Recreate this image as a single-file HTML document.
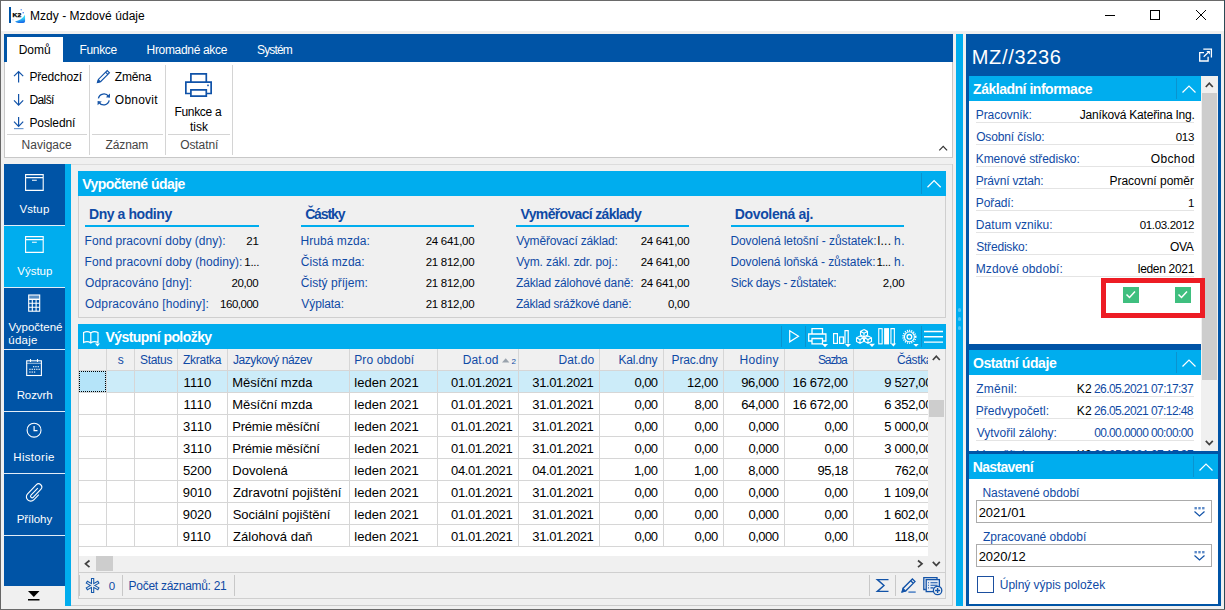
<!DOCTYPE html>
<html lang="cs">
<head>
<meta charset="utf-8">
<title>Mzdy - Mzdové údaje</title>
<style>
*{box-sizing:border-box;margin:0;padding:0}
html,body{width:1225px;height:610px;overflow:hidden;background:#f0f0f0}
body{position:relative;font-family:"Liberation Sans","DejaVu Sans",sans-serif;font-size:12px;color:#000}
.a{position:absolute}
.t{position:absolute;white-space:nowrap;line-height:16px;font-size:12px}
.bl{color:#0f4aa5}
.w{color:#fff}
.b{font-weight:bold}
svg{position:absolute;overflow:visible}
.ic{fill:none;stroke:#1253a8;stroke-width:1.2}
.iw{fill:none;stroke:#fff;stroke-width:1.2}
</style>
</head>
<body>
<div class="a" style="left:0px;top:0px;width:1225px;height:1px;background:#6a6a6a"></div>
<div class="a" style="left:0px;top:0px;width:1px;height:610px;background:#666"></div>
<div class="a" style="left:1224px;top:0px;width:1px;height:610px;background:#2b4a55"></div>
<div class="a" style="left:0px;top:609px;width:1225px;height:1px;background:#6a6a6a"></div>
<div class="a" style="left:1px;top:1px;width:1223px;height:30px;background:#fff"></div>
<div class="a" style="left:9px;top:7px;width:2px;height:16px;background:#0054a6"></div>
<svg style="left:9px;top:7px" width="17" height="17" viewBox="9 7 17 17"><defs><linearGradient id="k2g" x1="0" y1="0" x2="0.200" y2="1"><stop offset="0" stop-color="#3ff0ff"/><stop offset="0.550" stop-color="#2fd0f8"/><stop offset="1" stop-color="#1a6fe8"/></linearGradient></defs><path d="M25 14.800L25.100 21.300Q25 23 23.400 23L18.500 23Q16.500 22.600 15 21.400Q21.500 20.500 25 14.800Z" fill="url(#k2g)"/><circle cx="21.200" cy="9.800" r="0.700" fill="#4b8df0"/><circle cx="23.200" cy="12.800" r="0.800" fill="#3f7ff0"/><circle cx="13" cy="19.800" r="0.600" fill="#9cc4f5"/><text x="12.600" y="16.800" font-family="Liberation Sans,sans-serif" font-weight="bold" font-size="5.600" textLength="8.700" lengthAdjust="spacingAndGlyphs" fill="#000" stroke="#000" stroke-width="0.250">K2</text></svg>
<div class="t" style="left:29.92px;top:8px;letter-spacing:0.043px">Mzdy - Mzdové údaje</div>
<svg style="left:1100px;top:5px" width="115" height="20" viewBox="0 0 115 20"><g fill="none" stroke="#000" stroke-width="1"><path d="M5 10.500h10"/><rect x="50.500" y="5.500" width="9" height="9"/><path d="M96 5l10 10M106 5l-10 10"/></g></svg>
<div class="a" style="left:4px;top:34px;width:949px;height:28px;background:#0054a6"></div>
<div class="a" style="left:7px;top:37px;width:56px;height:25px;background:#fff"></div>
<div class="a" style="left:4px;top:62px;width:949px;height:96px;background:#fff;border:1px solid #c8c8c8;border-top:0"></div>
<div class="t" style="left:18.72px;top:42px;letter-spacing:-0.043px">Domů</div>
<div class="t w" style="left:79.42px;top:42px;letter-spacing:-0.307px">Funkce</div>
<div class="t w" style="left:146.62px;top:42px;letter-spacing:-0.333px">Hromadné akce</div>
<div class="t w" style="left:257.06px;top:42px;letter-spacing:-0.874px">Systém</div>
<div class="a" style="left:89px;top:65px;width:1px;height:90px;background:#d4d4d4"></div>
<div class="a" style="left:165px;top:65px;width:1px;height:90px;background:#d4d4d4"></div>
<div class="a" style="left:232px;top:65px;width:1px;height:90px;background:#d4d4d4"></div>
<div class="a" style="left:7px;top:134px;width:80px;height:1px;background:#d4d4d4"></div>
<div class="a" style="left:92px;top:134px;width:71px;height:1px;background:#d4d4d4"></div>
<div class="a" style="left:168px;top:134px;width:62px;height:1px;background:#d4d4d4"></div>
<div class="t" style="left:29.42px;top:69px;letter-spacing:-0.173px">Předchozí</div>
<div class="t" style="left:29.42px;top:92px;letter-spacing:-0.574px">Další</div>
<div class="t" style="left:29.42px;top:115px;letter-spacing:-0.094px">Poslední</div>
<div class="t" style="left:114.72px;top:69px;letter-spacing:-0.142px">Změna</div>
<div class="t" style="left:114.83px;top:92px;letter-spacing:0.217px">Obnovit</div>
<div class="t" style="left:174.42px;top:104px;letter-spacing:-0.311px">Funkce a</div>
<div class="t" style="left:190.02px;top:119px;letter-spacing:-0.012px">tisk</div>
<div class="t" style="left:21.62px;top:137px;letter-spacing:0.013px;color:#444">Navigace</div>
<div class="t" style="left:105.62px;top:137px;letter-spacing:-0.135px;color:#444">Záznam</div>
<div class="t" style="left:180.13px;top:137px;letter-spacing:-0.059px;color:#444">Ostatní</div>
<svg style="left:12px;top:70px" width="14" height="60" viewBox="0 0 14 60"><g class="ic"><path d="M6.600 12.600V1.500M2 6.200l4.600-4.700L11.200 6.200"/><path d="M6.600 24v11M2 30.400l4.600 4.700L11.200 30.400"/><path d="M6.600 47v9.300M2 51.700l4.600 4.700l4.600-4.700"/><path d="M2 58.600h9.500" stroke="#6f9bd0"/></g></svg>
<svg style="left:96px;top:69px" width="16" height="40" viewBox="0 0 16 40"><g class="ic"><path d="M1.600 13.400L2.600 10.200L11.200 1.600L13.400 3.800L4.800 12.400ZM9.600 3.200l2.200 2.200"/><path d="M1.600 13.400l0.800-2.600l1.800 1.800z" fill="#1b57a8"/><path d="M2.400 29.400A5.600 5.600 0 0 1 12.650 27.600" style="stroke-width:1.300"/><path d="M13.200 31.400A5.600 5.600 0 0 1 3 33.300" style="stroke-width:1.300"/></g><path d="M14 24.500V28.800L9.800 28.300Z M1.600 36.300V32L5.800 32.500Z" fill="#1b57a8"/></svg>
<svg style="left:185px;top:73px" width="27" height="24" viewBox="0 0 27 24"><g class="ic" style="stroke-width:1.700;stroke:#0f52a8"><path d="M5.900 8.600V0.850h15.400V8.600M5.900 20.500H0.850V9.100h25.300v11.400H21.300M5.900 16.800h15.400v6.300H5.900z"/></g><rect x="22.200" y="11.600" width="1.600" height="1.600" fill="#0f52a8"/></svg>
<svg style="left:939px;top:146px" width="9" height="5" viewBox="0 0 9 5"><path d="M0.300 4.300l3.900-3.900l3.900 3.900" fill="none" stroke="#333" stroke-width="1.200"/></svg>
<div class="a" style="left:4px;top:164px;width:949px;height:1px;background:#dcdcdc"></div>
<div class="a" style="left:952px;top:164px;width:1px;height:442px;background:#cccccc"></div>
<div class="a" style="left:71px;top:605px;width:882px;height:1px;background:#cccccc"></div>
<div class="a" style="left:4px;top:164px;width:61px;height:422px;background:#0054a6"></div>
<div class="a" style="left:65px;top:164px;width:6px;height:442px;background:#00adee"></div>
<div class="a" style="left:4px;top:226px;width:61px;height:61px;background:#00adee"></div>
<div class="a" style="left:4px;top:225px;width:61px;height:1px;background:#e3edf7"></div>
<div class="a" style="left:4px;top:287px;width:61px;height:1px;background:#e3edf7"></div>
<div class="a" style="left:4px;top:349px;width:61px;height:1px;background:#e3edf7"></div>
<div class="a" style="left:4px;top:411px;width:61px;height:1px;background:#e3edf7"></div>
<div class="a" style="left:4px;top:473px;width:61px;height:1px;background:#e3edf7"></div>
<div class="a" style="left:4px;top:535px;width:61px;height:1px;background:#e3edf7"></div>
<div class="t w" style="left:19.45px;top:201px;font-size:11.5px;letter-spacing:0.107px">Vstup</div>
<div class="t w" style="left:17.35px;top:263px;font-size:11.5px;letter-spacing:-0.025px">Výstup</div>
<div class="t w" style="left:8.55px;top:319px;font-size:11.5px;letter-spacing:0.005px">Vypočtené</div>
<div class="t w" style="left:8.22px;top:332px;font-size:11.5px;letter-spacing:0.288px">údaje</div>
<div class="t w" style="left:16.66px;top:387px;font-size:11.5px;letter-spacing:-0.087px">Rozvrh</div>
<div class="t w" style="left:13.36px;top:449px;font-size:11.5px;letter-spacing:0.296px">Historie</div>
<div class="t w" style="left:16.66px;top:511px;font-size:11.5px;letter-spacing:-0.038px">Přílohy</div>
<svg style="left:24.500px;top:174px" width="19" height="17" viewBox="0 0 19 17"><g class="iw" style="stroke-width:1.100"><path d="M0.600 0.600h17.600v15.800h-17.600zM0.600 3.600h17.600M7 6.300h4.800"/></g></svg>
<svg style="left:24.500px;top:236px" width="19" height="17" viewBox="0 0 19 17"><g class="iw" style="stroke-width:1.100"><path d="M0.600 0.600h17.600v15.800h-17.600zM0.600 3.600h17.600M7 6.300h4.800"/></g></svg>
<svg style="left:28px;top:294px" width="13" height="18" viewBox="0 0 13 18"><rect x="0.700" y="1" width="11" height="4" fill="#fff" fill-opacity="0.350"/><g class="iw" style="stroke-width:1.100"><rect x="0.700" y="1" width="11" height="16.200"/><path d="M0.700 5.300h11" stroke-width="1.400"/><path d="M0.700 9.300h11M0.700 13.200h11M4.300 5.300v12M8.100 5.300v12"/></g></svg>
<svg style="left:26px;top:359px" width="16" height="17" viewBox="0 0 16 17"><g class="iw" style="stroke-width:1.100"><rect x="0.700" y="1.800" width="14.700" height="14.700"/><path d="M4.500 0v3M11.500 0v3"/><path d="M0.700 4.300h14.700" stroke-opacity="0.600"/></g><g fill="#fff" fill-opacity="0.850"><rect x="7" y="7" width="1.300" height="1.300"/><rect x="9.300" y="7" width="1.300" height="1.300"/><rect x="11.600" y="7" width="1.300" height="1.300"/><rect x="3.300" y="9.700" width="1.300" height="1.300"/><rect x="5.600" y="9.700" width="1.300" height="1.300"/><rect x="7.900" y="9.700" width="1.300" height="1.300"/><rect x="10.200" y="9.700" width="1.300" height="1.300"/><rect x="12.500" y="9.700" width="1.300" height="1.300"/><rect x="3.300" y="12.400" width="1.300" height="1.300"/><rect x="5.600" y="12.400" width="1.300" height="1.300"/><rect x="7.900" y="12.400" width="1.300" height="1.300"/></g></svg>
<svg style="left:26px;top:422px" width="16" height="16" viewBox="0 0 16 16"><g class="iw" style="stroke-width:1.100"><circle cx="8.050" cy="8.150" r="6.950"/><path d="M8.100 4v4.600h3.400" stroke-width="1.200"/></g></svg>
<svg style="left:25px;top:482px" width="18" height="20" viewBox="0 0 18 20"><g class="iw" style="stroke-width:1.100"><path d="M12.800 6.200l-6.800 7a1.500 1.500 0 0 0 2.200 2.100l7.600-8a3.200 3.200 0 0 0-4.600-4.500l-8.600 9a4.300 4.300 0 0 0 6.200 6l5-5.200"/></g></svg>
<svg style="left:28px;top:591px" width="12" height="11" viewBox="0 0 12 11"><path d="M0 0h11.500l-5.700 6z" fill="#000"/><rect x="0" y="8" width="11.500" height="1.500" fill="#000"/></svg>
<div class="a" style="left:78px;top:196px;width:868px;height:122px;background:transparent;border:1px solid #cfcfcf;border-top:0"></div>
<div class="a" style="left:78px;top:171px;width:868px;height:25px;background:#00adee"></div>
<div class="t b w" style="left:82.20px;top:176px;font-size:14px;letter-spacing:-0.540px">Vypočtené údaje</div>
<div class="a" style="left:921px;top:173px;width:1px;height:21px;background:#0a93cf"></div>
<svg style="left:926.500px;top:180px" width="15" height="8" viewBox="0 0 15 8"><path d="M0.500 7.200l6.600-6.600l6.600 6.600" class="iw" style="stroke-width:1.300"/></svg>
<div class="t b bl" style="left:88.96px;top:206px;font-size:14px;letter-spacing:-0.417px">Dny a hodiny</div>
<div class="a" style="left:85px;top:225px;width:174px;height:2px;background:#00adee"></div>
<div class="t bl" style="left:84.62px;top:233px;letter-spacing:0.042px">Fond pracovní doby (dny):</div>
<div class="t" style="left:246.32px;top:233px;font-size:11.5px;letter-spacing:-0.252px">21</div>
<div class="t bl" style="left:84.62px;top:254px;letter-spacing:0.063px">Fond pracovní doby (hodiny):</div>
<div class="t" style="left:244.32px;top:254px;font-size:11.5px;letter-spacing:-0.318px">1...</div>
<div class="t bl" style="left:85.03px;top:275px;letter-spacing:0.137px">Odpracováno [dny]:</div>
<div class="t" style="left:231.52px;top:275px;font-size:11.5px;letter-spacing:-0.388px">20,00</div>
<div class="t bl" style="left:85.03px;top:296px;letter-spacing:0.151px">Odpracováno [hodiny]:</div>
<div class="t" style="left:220.12px;top:296px;font-size:11.5px;letter-spacing:-0.491px">160,000</div>
<div class="t b bl" style="left:305.13px;top:206px;font-size:14px;letter-spacing:-1.114px">Částky</div>
<div class="a" style="left:301px;top:225px;width:173px;height:2px;background:#00adee"></div>
<div class="t bl" style="left:300.42px;top:233px;letter-spacing:0.068px">Hrubá mzda:</div>
<div class="t" style="left:425.72px;top:233px;font-size:11.5px;letter-spacing:-0.292px">24 641,00</div>
<div class="t bl" style="left:300.79px;top:254px;letter-spacing:0.055px">Čistá mzda:</div>
<div class="t" style="left:425.72px;top:254px;font-size:11.5px;letter-spacing:-0.292px">21 812,00</div>
<div class="t bl" style="left:300.79px;top:275px;letter-spacing:0.028px">Čistý příjem:</div>
<div class="t" style="left:425.72px;top:275px;font-size:11.5px;letter-spacing:-0.292px">21 812,00</div>
<div class="t bl" style="left:301.35px;top:296px;letter-spacing:-0.102px">Výplata:</div>
<div class="t" style="left:425.72px;top:296px;font-size:11.5px;letter-spacing:-0.292px">21 812,00</div>
<div class="t b bl" style="left:520.60px;top:206px;font-size:14px;letter-spacing:-0.670px">Vyměřovací základy</div>
<div class="a" style="left:516px;top:225px;width:173px;height:2px;background:#00adee"></div>
<div class="t bl" style="left:516.35px;top:233px;letter-spacing:-0.166px">Vyměřovací základ:</div>
<div class="t" style="left:640.72px;top:233px;font-size:11.5px;letter-spacing:-0.292px">24 641,00</div>
<div class="t bl" style="left:516.35px;top:254px;letter-spacing:-0.107px">Vym. zákl. zdr. poj.:</div>
<div class="t" style="left:640.72px;top:254px;font-size:11.5px;letter-spacing:-0.292px">24 641,00</div>
<div class="t bl" style="left:516.02px;top:275px;letter-spacing:-0.164px">Základ zálohové daně:</div>
<div class="t" style="left:640.72px;top:275px;font-size:11.5px;letter-spacing:-0.292px">24 641,00</div>
<div class="t bl" style="left:516.02px;top:296px;letter-spacing:-0.263px">Základ srážkové daně:</div>
<div class="t" style="left:667.95px;top:296px;font-size:11.5px;letter-spacing:-0.261px">0,00</div>
<div class="t b bl" style="left:734.76px;top:206px;font-size:14px;letter-spacing:-0.352px">Dovolená aj.</div>
<div class="a" style="left:731px;top:225px;width:173px;height:2px;background:#00adee"></div>
<div class="t bl" style="left:730.42px;top:233px;letter-spacing:-0.074px">Dovolená letošní - zůstatek:</div>
<div class="t bl" style="left:730.42px;top:254px;letter-spacing:-0.090px">Dovolená loňská - zůstatek:</div>
<div class="t bl" style="left:730.86px;top:275px;letter-spacing:-0.210px">Sick days - zůstatek:</div>
<div class="t" style="left:882.82px;top:275px;font-size:11.5px;letter-spacing:-0.218px">2,00</div>
<div class="t" style="left:877.49px;top:233px;letter-spacing:0.312px">l...</div>
<div class="t bl" style="left:893.97px;top:233px;letter-spacing:0.620px">h.</div>
<div class="t" style="left:876.42px;top:254px;font-size:11.5px;letter-spacing:-0.452px">1...</div>
<div class="t bl" style="left:893.97px;top:254px;letter-spacing:0.620px">h.</div>
<div class="a" style="left:78px;top:324px;width:868px;height:25px;background:#00adee"></div>
<div class="a" style="left:78px;top:349px;width:868px;height:250px;background:transparent;border:1px solid #cfcfcf;border-top:0"></div>
<div class="t b w" style="left:105.40px;top:329px;font-size:14px;letter-spacing:-0.557px">Výstupní položky</div>
<svg style="left:83px;top:331px" width="18" height="16" viewBox="0 0 18 16"><g class="iw"><path d="M7.800 2v9.500M7.800 2c-2-1.500-5-1.500-7.200-0.500v10c2.200-1 5.200-1 7.200 0.500c2-1.500 5-1.500 7.200-0.500v-10c-2.200-1-5.200-1-7.200 0.500"/></g><path d="M12 12.500h5l-2.500 3z" fill="#fff"/></svg>
<div class="a" style="left:79px;top:349px;width:849px;height:22px;background:#f0f0f0"></div>
<div class="a" style="left:79px;top:371px;width:849px;height:176px;background:#fff"></div>
<div class="a" style="left:79px;top:547px;width:849px;height:9px;background:#fff"></div>
<div class="a" style="left:107px;top:371px;width:821px;height:22px;background:#ccecf9"></div>
<div class="a" style="left:79px;top:370px;width:849px;height:1px;background:#d6d6d6"></div>
<div class="a" style="left:79px;top:392px;width:849px;height:1px;background:#d6d6d6"></div>
<div class="a" style="left:79px;top:414px;width:849px;height:1px;background:#d6d6d6"></div>
<div class="a" style="left:79px;top:436px;width:849px;height:1px;background:#d6d6d6"></div>
<div class="a" style="left:79px;top:458px;width:849px;height:1px;background:#d6d6d6"></div>
<div class="a" style="left:79px;top:480px;width:849px;height:1px;background:#d6d6d6"></div>
<div class="a" style="left:79px;top:502px;width:849px;height:1px;background:#d6d6d6"></div>
<div class="a" style="left:79px;top:524px;width:849px;height:1px;background:#d6d6d6"></div>
<div class="a" style="left:79px;top:546px;width:849px;height:1px;background:#d6d6d6"></div>
<div class="a" style="left:106px;top:349px;width:1px;height:198px;background:#d6d6d6"></div>
<div class="a" style="left:134px;top:349px;width:1px;height:198px;background:#d6d6d6"></div>
<div class="a" style="left:177px;top:349px;width:1px;height:198px;background:#d6d6d6"></div>
<div class="a" style="left:227px;top:349px;width:1px;height:198px;background:#d6d6d6"></div>
<div class="a" style="left:349px;top:349px;width:1px;height:198px;background:#d6d6d6"></div>
<div class="a" style="left:437px;top:349px;width:1px;height:198px;background:#d6d6d6"></div>
<div class="a" style="left:518px;top:349px;width:1px;height:198px;background:#d6d6d6"></div>
<div class="a" style="left:599px;top:349px;width:1px;height:198px;background:#d6d6d6"></div>
<div class="a" style="left:663px;top:349px;width:1px;height:198px;background:#d6d6d6"></div>
<div class="a" style="left:723px;top:349px;width:1px;height:198px;background:#d6d6d6"></div>
<div class="a" style="left:784px;top:349px;width:1px;height:198px;background:#d6d6d6"></div>
<div class="a" style="left:853px;top:349px;width:1px;height:198px;background:#d6d6d6"></div>
<div class="a" style="left:79px;top:371px;width:27px;height:21px;background:#b5e4f9;border:1px dotted #000"></div>
<div class="a" style="left:79px;top:349px;width:849px;height:200px;overflow:hidden">
<div class="t bl" style="left:38.75px;top:3px">s</div>
<div class="t bl" style="left:61.06px;top:3px;letter-spacing:-0.328px">Status</div>
<div class="t bl" style="left:104.02px;top:3px;letter-spacing:-0.271px">Zkratka</div>
<div class="t bl" style="left:153.91px;top:3px;letter-spacing:-0.421px">Jazykový název</div>
<div class="t bl" style="left:275.22px;top:3px;letter-spacing:0.126px">Pro období</div>
<div class="t bl" style="left:383.72px;top:3px;letter-spacing:0.060px">Dat.od</div>
<div class="t bl" style="left:432.60px;top:8px;font-size:8px;line-height:10px">2</div>
<svg style="left:423px;top:9px" width="8" height="5" viewBox="0 0 8 5"><path d="M0 4.500l3.700-4.200l3.700 4.200z" fill="#9aa3ad"/></svg>
<div class="t bl" style="left:479.52px;top:3px;letter-spacing:0.047px">Dat.do</div>
<div class="t bl" style="left:539.42px;top:3px;letter-spacing:-0.136px">Kal.dny</div>
<div class="t bl" style="left:592.62px;top:3px;letter-spacing:-0.178px">Prac.dny</div>
<div class="t bl" style="left:660.62px;top:3px;letter-spacing:0.311px">Hodiny</div>
<div class="t bl" style="left:738.96px;top:3px;letter-spacing:-1.095px">Sazba</div>
<div class="t bl" style="left:817.89px;top:3px;letter-spacing:-0.348px">Částka</div>
<div class="t" style="left:104.51px;top:26px;font-size:13px;letter-spacing:0.269px">1110</div>
<div class="t" style="left:153.23px;top:26px;font-size:13px;letter-spacing:-0.059px">Měsíční mzda</div>
<div class="t" style="left:275.32px;top:26px;font-size:13px">leden 2021</div>
<div class="t" style="left:372.09px;top:26px;font-size:13px;letter-spacing:-0.391px">01.01.2021</div>
<div class="t" style="left:453.30px;top:26px;font-size:13px;letter-spacing:-0.393px">31.01.2021</div>
<div class="t" style="left:555.49px;top:26px;font-size:13px;letter-spacing:-0.562px">0,00</div>
<div class="t" style="left:608.11px;top:26px;font-size:13px;letter-spacing:-0.358px">12,00</div>
<div class="t" style="left:662.29px;top:26px;font-size:13px;letter-spacing:-0.409px">96,000</div>
<div class="t" style="left:713.45px;top:26px;font-size:13px;letter-spacing:-0.272px">16 672,00</div>
<div class="t" style="left:805.23px;top:26px;font-size:13px;letter-spacing:-0.332px">9 527,00</div>
<div class="t" style="left:104.51px;top:48px;font-size:13px;letter-spacing:0.269px">1110</div>
<div class="t" style="left:153.23px;top:48px;font-size:13px;letter-spacing:-0.059px">Měsíční mzda</div>
<div class="t" style="left:275.32px;top:48px;font-size:13px">leden 2021</div>
<div class="t" style="left:372.09px;top:48px;font-size:13px;letter-spacing:-0.391px">01.01.2021</div>
<div class="t" style="left:453.30px;top:48px;font-size:13px;letter-spacing:-0.393px">31.01.2021</div>
<div class="t" style="left:555.49px;top:48px;font-size:13px;letter-spacing:-0.562px">0,00</div>
<div class="t" style="left:615.54px;top:48px;font-size:13px;letter-spacing:-0.543px">8,00</div>
<div class="t" style="left:662.24px;top:48px;font-size:13px;letter-spacing:-0.399px">64,000</div>
<div class="t" style="left:713.45px;top:48px;font-size:13px;letter-spacing:-0.272px">16 672,00</div>
<div class="t" style="left:805.18px;top:48px;font-size:13px;letter-spacing:-0.325px">6 352,00</div>
<div class="t" style="left:103.90px;top:70px;font-size:13px;letter-spacing:0.216px">3110</div>
<div class="t" style="left:153.23px;top:70px;font-size:13px;letter-spacing:-0.206px">Prémie měsíční</div>
<div class="t" style="left:275.32px;top:70px;font-size:13px">leden 2021</div>
<div class="t" style="left:372.09px;top:70px;font-size:13px;letter-spacing:-0.391px">01.01.2021</div>
<div class="t" style="left:453.30px;top:70px;font-size:13px;letter-spacing:-0.393px">31.01.2021</div>
<div class="t" style="left:555.49px;top:70px;font-size:13px;letter-spacing:-0.562px">0,00</div>
<div class="t" style="left:615.59px;top:70px;font-size:13px;letter-spacing:-0.562px">0,00</div>
<div class="t" style="left:669.39px;top:70px;font-size:13px;letter-spacing:-0.479px">0,000</div>
<div class="t" style="left:745.49px;top:70px;font-size:13px;letter-spacing:-0.562px">0,00</div>
<div class="t" style="left:805.32px;top:70px;font-size:13px;letter-spacing:-0.345px">5 000,00</div>
<div class="t" style="left:103.90px;top:92px;font-size:13px;letter-spacing:0.216px">3110</div>
<div class="t" style="left:153.23px;top:92px;font-size:13px;letter-spacing:-0.206px">Prémie měsíční</div>
<div class="t" style="left:275.32px;top:92px;font-size:13px">leden 2021</div>
<div class="t" style="left:372.09px;top:92px;font-size:13px;letter-spacing:-0.391px">01.01.2021</div>
<div class="t" style="left:453.30px;top:92px;font-size:13px;letter-spacing:-0.393px">31.01.2021</div>
<div class="t" style="left:555.49px;top:92px;font-size:13px;letter-spacing:-0.562px">0,00</div>
<div class="t" style="left:615.59px;top:92px;font-size:13px;letter-spacing:-0.562px">0,00</div>
<div class="t" style="left:669.39px;top:92px;font-size:13px;letter-spacing:-0.479px">0,000</div>
<div class="t" style="left:745.49px;top:92px;font-size:13px;letter-spacing:-0.562px">0,00</div>
<div class="t" style="left:805.34px;top:92px;font-size:13px;letter-spacing:-0.349px">3 000,00</div>
<div class="t" style="left:103.88px;top:114px;font-size:13px;letter-spacing:-0.097px">5200</div>
<div class="t" style="left:153.23px;top:114px;font-size:13px;letter-spacing:0.077px">Dovolená</div>
<div class="t" style="left:275.32px;top:114px;font-size:13px">leden 2021</div>
<div class="t" style="left:372.09px;top:114px;font-size:13px;letter-spacing:-0.391px">04.01.2021</div>
<div class="t" style="left:453.29px;top:114px;font-size:13px;letter-spacing:-0.391px">04.01.2021</div>
<div class="t" style="left:555.01px;top:114px;font-size:13px;letter-spacing:-0.401px">1,00</div>
<div class="t" style="left:615.11px;top:114px;font-size:13px;letter-spacing:-0.401px">1,00</div>
<div class="t" style="left:669.34px;top:114px;font-size:13px;letter-spacing:-0.465px">8,000</div>
<div class="t" style="left:738.39px;top:114px;font-size:13px;letter-spacing:-0.439px">95,18</div>
<div class="t" style="left:815.73px;top:114px;font-size:13px;letter-spacing:-0.398px">762,00</div>
<div class="t" style="left:103.79px;top:136px;font-size:13px;letter-spacing:-0.068px">9010</div>
<div class="t" style="left:153.89px;top:136px;font-size:13px;letter-spacing:0.085px">Zdravotní pojištění</div>
<div class="t" style="left:275.32px;top:136px;font-size:13px">leden 2021</div>
<div class="t" style="left:372.09px;top:136px;font-size:13px;letter-spacing:-0.391px">01.01.2021</div>
<div class="t" style="left:453.30px;top:136px;font-size:13px;letter-spacing:-0.393px">31.01.2021</div>
<div class="t" style="left:555.49px;top:136px;font-size:13px;letter-spacing:-0.562px">0,00</div>
<div class="t" style="left:615.59px;top:136px;font-size:13px;letter-spacing:-0.562px">0,00</div>
<div class="t" style="left:669.39px;top:136px;font-size:13px;letter-spacing:-0.479px">0,000</div>
<div class="t" style="left:745.49px;top:136px;font-size:13px;letter-spacing:-0.562px">0,00</div>
<div class="t" style="left:804.85px;top:136px;font-size:13px;letter-spacing:-0.278px">1 109,00</div>
<div class="t" style="left:103.79px;top:158px;font-size:13px;letter-spacing:-0.068px">9020</div>
<div class="t" style="left:153.71px;top:158px;font-size:13px;letter-spacing:-0.037px">Sociální pojištění</div>
<div class="t" style="left:275.32px;top:158px;font-size:13px">leden 2021</div>
<div class="t" style="left:372.09px;top:158px;font-size:13px;letter-spacing:-0.391px">01.01.2021</div>
<div class="t" style="left:453.30px;top:158px;font-size:13px;letter-spacing:-0.393px">31.01.2021</div>
<div class="t" style="left:555.49px;top:158px;font-size:13px;letter-spacing:-0.562px">0,00</div>
<div class="t" style="left:615.59px;top:158px;font-size:13px;letter-spacing:-0.562px">0,00</div>
<div class="t" style="left:669.39px;top:158px;font-size:13px;letter-spacing:-0.479px">0,000</div>
<div class="t" style="left:745.49px;top:158px;font-size:13px;letter-spacing:-0.562px">0,00</div>
<div class="t" style="left:804.85px;top:158px;font-size:13px;letter-spacing:-0.278px">1 602,00</div>
<div class="t" style="left:103.79px;top:180px;font-size:13px;letter-spacing:0.021px">9110</div>
<div class="t" style="left:153.89px;top:180px;font-size:13px;letter-spacing:0.086px">Zálohová daň</div>
<div class="t" style="left:275.32px;top:180px;font-size:13px">leden 2021</div>
<div class="t" style="left:372.09px;top:180px;font-size:13px;letter-spacing:-0.391px">01.01.2021</div>
<div class="t" style="left:453.30px;top:180px;font-size:13px;letter-spacing:-0.393px">31.01.2021</div>
<div class="t" style="left:555.49px;top:180px;font-size:13px;letter-spacing:-0.562px">0,00</div>
<div class="t" style="left:615.59px;top:180px;font-size:13px;letter-spacing:-0.562px">0,00</div>
<div class="t" style="left:669.39px;top:180px;font-size:13px;letter-spacing:-0.479px">0,000</div>
<div class="t" style="left:745.49px;top:180px;font-size:13px;letter-spacing:-0.562px">0,00</div>
<div class="t" style="left:815.41px;top:180px;font-size:13px;letter-spacing:-0.140px">118,00</div>
</div>
<div class="a" style="left:928px;top:349px;width:17px;height:223px;background:#f0f0f0"></div>
<div class="a" style="left:929px;top:400px;width:15px;height:17px;background:#cdcdcd"></div>
<div class="a" style="left:79px;top:556px;width:849px;height:16px;background:#f0f0f0"></div>
<div class="a" style="left:96px;top:556px;width:17px;height:15px;background:#cdcdcd"></div>
<svg style="left:84px;top:560px" width="7" height="8" viewBox="0 0 7 8"><path d="M5.500 0.500l-4 3.300l4 3.300" fill="none" stroke="#404040" stroke-width="1.700"/></svg>
<svg style="left:917px;top:560px" width="7" height="8" viewBox="0 0 7 8"><path d="M1 0.500l4 3.300l-4 3.300" fill="none" stroke="#404040" stroke-width="1.700"/></svg>
<svg style="left:932px;top:355px" width="9" height="6" viewBox="0 0 9 6"><path d="M0.800 5l3.500-3.800l3.500 3.800" fill="none" stroke="#404040" stroke-width="1.700"/></svg>
<svg style="left:932px;top:561px" width="9" height="6" viewBox="0 0 9 6"><path d="M0.800 0.800l3.500 3.800l3.500-3.800" fill="none" stroke="#404040" stroke-width="1.700"/></svg>
<div class="a" style="left:79px;top:572px;width:866px;height:1px;background:#cfcfcf"></div>
<div class="a" style="left:79px;top:575px;width:1px;height:21px;background:#c8c8c8"></div>
<div class="a" style="left:122px;top:575px;width:1px;height:21px;background:#c8c8c8"></div>
<div class="a" style="left:234px;top:575px;width:1px;height:21px;background:#c8c8c8"></div>
<div class="a" style="left:869px;top:575px;width:1px;height:21px;background:#c8c8c8"></div>
<div class="a" style="left:895px;top:575px;width:1px;height:21px;background:#c8c8c8"></div>
<div class="t bl" style="left:108.75px;top:578px;font-size:11.5px">0</div>
<div class="t bl" style="left:128.62px;top:578px;letter-spacing:-0.285px">Počet záznamů: 21</div>
<svg style="left:85px;top:578px" width="16" height="15" viewBox="0 0 16 15"><path d="M7.60 0.00L7.60 15.00M1.36 3.90L13.84 11.10M13.84 3.90L1.36 11.10" fill="none" stroke="#1558ab" stroke-width="3.300"/><path d="M7.60 1.10L7.60 13.90M2.32 4.45L12.88 10.55M12.88 4.45L2.32 10.55" fill="none" stroke="#f0f0f0" stroke-width="1.200"/></svg>
<svg style="left:876px;top:579px" width="13" height="13" viewBox="0 0 13 13"><path d="M12.500 0.600H1.300L8 6.500L1.300 12.400H12.500" class="ic" style="stroke-width:1.400"/></svg>
<svg style="left:901px;top:578px" width="16" height="15" viewBox="0 0 16 15"><g class="ic" style="stroke-width:1.300"><path d="M1.200 13.800L2.200 10.200L11.400 1L14 3.600L4.800 12.800ZM9.700 2.700l2.600 2.600"/><path d="M1.200 13.800l0.900-3l2.100 2.100z" fill="#1b57a8"/><path d="M7.400 14.100h7.300" stroke="#4a7fc4" stroke-width="1.500"/></g></svg>
<svg style="left:923px;top:576px" width="20" height="20" viewBox="0 0 20 20"><g class="ic" style="stroke-width:1.300"><path d="M2.800 13.500H0.800V1.600h13.200v1.600"/><rect x="3.200" y="3.600" width="13.200" height="12" fill="#e4ebf5"/><path d="M7.500 6.700h7M7.500 9.300h7M7.500 11.900h3" stroke-width="1.100"/><path d="M5 6.700h0.900M5 9.300h0.900M5 11.900h0.900" stroke-width="1.100"/><circle cx="14.600" cy="14.500" r="4.200" fill="#f0f0f0"/><path d="M14.600 12v5M12.100 14.500h5" stroke-width="1.400"/></g></svg>
<div class="a" style="left:781px;top:326px;width:1px;height:21px;background:#0a93cf"></div>
<div class="a" style="left:805px;top:326px;width:1px;height:21px;background:#0a93cf"></div>
<div class="a" style="left:921px;top:326px;width:1px;height:21px;background:#0a93cf"></div>
<svg style="left:789px;top:330px" width="11" height="13" viewBox="0 0 11 13"><path d="M0.700 0.800l8.800 5.500l-8.800 5.500z" class="iw"/></svg>
<svg style="left:808px;top:328px" width="21" height="20" viewBox="0 0 21 20"><g class="iw" style="stroke-width:1.300"><path d="M4 6V0.700h10.500V6M4 13H0.700V6h17.200v7h-3.400M4 10.500h10.500v5.300H4z"/></g><path d="M14 16h6l-3 3.200z" fill="#fff"/></svg>
<svg style="left:833px;top:330px" width="19" height="18" viewBox="0 0 19 18"><g class="iw"><rect x="0.600" y="3.600" width="3.800" height="9.800"/><rect x="6.600" y="7" width="3.800" height="6.400"/><path d="M12 13.400V0.600h3.200v13"/></g><path d="M12 14h6l-3 3.200z" fill="#fff"/></svg>
<svg style="left:856px;top:329px" width="20" height="18" viewBox="0 0 20 18"><g class="iw" style="stroke-width:1.100"><path d="M8 0.600l3.500 1.800v3.700l-3.500 1.800l-3.500-1.800v-3.700zM4.500 2.400l3.500 1.800l3.500-1.800M8 4.200v3.700"/><path d="M4 7l3.500 1.800v3.700l-3.500 1.800l-3.500-1.800v-3.700zM0.500 8.800l3.500 1.800l3.500-1.800M4 10.600v3.700"/><path d="M12 7l3.500 1.800v3.700l-3.500 1.800l-3.500-1.800v-3.700zM8.500 8.800l3.500 1.800l3.500-1.800M12 10.600v3.700"/></g><path d="M13 14.800h6l-3 3.200z" fill="#fff"/></svg>
<svg style="left:878px;top:328px" width="20" height="20" viewBox="0 0 20 20"><g class="iw" style="stroke-width:1.100"><rect x="0.750" y="0.650" width="3.400" height="15.200"/><path d="M12.950 16V0.650h3.400v15.400"/></g><rect x="6.100" y="0.100" width="4.900" height="16.300" fill="#fff"/><path d="M12.700 15.600h5.400l-2.700 2.800z" fill="#fff"/></svg>
<svg style="left:902px;top:330px" width="18" height="18" viewBox="0 0 18 18"><g class="iw"><circle cx="7.400" cy="6.800" r="2.300" stroke-width="1.300"/><circle cx="7.400" cy="6.800" r="5" stroke-width="1.100"/><circle cx="7.400" cy="6.800" r="6.300" stroke-width="1.600" stroke-dasharray="1.100 1.099"/></g><path d="M11.300 14h5.400l-2.700 2.800z" fill="#fff"/></svg>
<svg style="left:924px;top:330px" width="19" height="14" viewBox="0 0 19 14"><path d="M0 1.500h19M0 6.800h19M0 12.100h19" class="iw" style="stroke-width:1.400"/></svg>
<div class="a" style="left:956px;top:34px;width:7px;height:572px;background:#00adee"></div>
<div class="a" style="left:957.7px;top:308.2px;width:3.6px;height:3.6px;background:#4fc3f5;border-radius:2px"></div>
<div class="a" style="left:957.7px;top:317.2px;width:3.6px;height:3.6px;background:#4fc3f5;border-radius:2px"></div>
<div class="a" style="left:957.7px;top:326.2px;width:3.6px;height:3.6px;background:#4fc3f5;border-radius:2px"></div>
<div class="a" style="left:966px;top:34px;width:255px;height:572px;background:#0054a6"></div>
<div class="t w" style="left:971.66px;top:45px;font-size:20px;line-height:24px;letter-spacing:0.691px">MZ//3236</div>
<svg style="left:1199px;top:48px" width="14" height="14" viewBox="0 0 14 14"><g class="iw" style="stroke-width:1.300"><path d="M5 4.600H0.700v8.400h8.400V8.700M4.300 1.200h8.100v8.200M4.700 8.700L9.500 4.100"/></g><path d="M10.900 2.900V6.500L7.300 2.900Z" fill="#fff"/></svg>
<div class="a" style="left:969px;top:76px;width:232px;height:268px;background:#fff"></div>
<div class="a" style="left:969px;top:76px;width:232px;height:25px;background:#00adee"></div>
<div class="t b w" style="left:973.08px;top:81px;font-size:14px;letter-spacing:-0.482px">Základní informace</div>
<div class="a" style="left:1176px;top:78px;width:1px;height:21px;background:#0a93cf"></div>
<svg style="left:1182px;top:85px" width="14" height="8" viewBox="0 0 14 8"><path d="M0.500 7.500l6.500-6.500l6.500 6.500" class="iw"/></svg>
<div class="t bl" style="left:975.72px;top:107px;letter-spacing:-0.057px">Pracovník:</div>
<div class="t" style="left:1079.81px;top:107px;letter-spacing:-0.206px">Janíková Kateřina Ing.</div>
<div class="a" style="left:976px;top:122px;width:218px;height:1px;background:#e4e4e4"></div>
<div class="t bl" style="left:976.13px;top:129px;letter-spacing:-0.131px">Osobní číslo:</div>
<div class="t" style="left:1175.75px;top:129px;font-size:11.5px;letter-spacing:-0.316px">013</div>
<div class="a" style="left:976px;top:144px;width:218px;height:1px;background:#e4e4e4"></div>
<div class="t bl" style="left:975.72px;top:151px;letter-spacing:-0.077px">Kmenové středisko:</div>
<div class="t" style="left:1150.83px;top:151px;letter-spacing:0.342px">Obchod</div>
<div class="a" style="left:976px;top:166px;width:218px;height:1px;background:#e4e4e4"></div>
<div class="t bl" style="left:975.72px;top:173px;letter-spacing:-0.179px">Právní vztah:</div>
<div class="t" style="left:1109.42px;top:173px;letter-spacing:-0.009px">Pracovní poměr</div>
<div class="a" style="left:976px;top:188px;width:218px;height:1px;background:#e4e4e4"></div>
<div class="t bl" style="left:975.72px;top:195px;letter-spacing:-0.085px">Pořadí:</div>
<div class="t" style="left:1187.97px;top:195px;font-size:11.5px">1</div>
<div class="a" style="left:976px;top:210px;width:218px;height:1px;background:#e4e4e4"></div>
<div class="t bl" style="left:975.72px;top:217px;letter-spacing:0.080px">Datum vzniku:</div>
<div class="t" style="left:1139.65px;top:217px;font-size:11.5px;letter-spacing:-0.314px">01.03.2012</div>
<div class="a" style="left:976px;top:232px;width:218px;height:1px;background:#e4e4e4"></div>
<div class="t bl" style="left:976.16px;top:239px;letter-spacing:-0.191px">Středisko:</div>
<div class="t" style="left:1169.93px;top:239px;letter-spacing:-0.280px">OVA</div>
<div class="a" style="left:976px;top:254px;width:218px;height:1px;background:#e4e4e4"></div>
<div class="t bl" style="left:975.72px;top:261px;letter-spacing:0.130px">Mzdové období:</div>
<div class="t" style="left:1137.79px;top:261px;letter-spacing:-0.311px">leden 2021</div>
<div class="a" style="left:976px;top:276px;width:218px;height:1px;background:#e4e4e4"></div>
<div class="a" style="left:969px;top:350px;width:232px;height:101px;background:#fff"></div>
<div class="a" style="left:969px;top:350px;width:232px;height:25px;background:#00adee"></div>
<div class="t b w" style="left:972.93px;top:355px;font-size:14px;letter-spacing:-0.411px">Ostatní údaje</div>
<div class="a" style="left:1176px;top:352px;width:1px;height:21px;background:#0a93cf"></div>
<svg style="left:1182px;top:359px" width="14" height="8" viewBox="0 0 14 8"><path d="M0.500 7.500l6.500-6.500l6.500 6.500" class="iw"/></svg>
<div class="a" style="left:969px;top:375px;width:232px;height:76px;overflow:hidden">
<div class="t bl" style="left:7.32px;top:6px;letter-spacing:0.223px">Změnil:</div>
<div class="t" style="left:107.82px;top:6px;letter-spacing:0.110px">K2</div>
<div class="t bl" style="left:125.00px;top:6px;letter-spacing:-0.583px">26.05.2021 07:17:37</div>
<div class="a" style="left:7px;top:21px;width:218px;height:1px;background:#e4e4e4"></div>
<div class="t bl" style="left:6.72px;top:28px;letter-spacing:0.048px">Předvypočetl:</div>
<div class="t" style="left:107.82px;top:28px;letter-spacing:0.110px">K2</div>
<div class="t bl" style="left:125.00px;top:28px;letter-spacing:-0.588px">26.05.2021 07:12:48</div>
<div class="a" style="left:7px;top:43px;width:218px;height:1px;background:#e4e4e4"></div>
<div class="t bl" style="left:7.65px;top:50px">Vytvořil zálohy:</div>
<div class="t bl" style="left:125.13px;top:50px;letter-spacing:-0.598px">00.00.0000 00:00:00</div>
<div class="a" style="left:7px;top:65px;width:218px;height:1px;background:#e4e4e4"></div>
<div class="t bl" style="left:7.65px;top:72px;letter-spacing:-0.122px">Vypočítal:</div>
<div class="t" style="left:107.82px;top:72px;letter-spacing:0.110px">K2</div>
<div class="t bl" style="left:125.00px;top:72px;letter-spacing:-0.583px">26.05.2021 07:17:37</div>
<div class="a" style="left:7px;top:87px;width:218px;height:1px;background:#e4e4e4"></div>
</div>
<div class="a" style="left:1201px;top:76px;width:17px;height:375px;background:#f0f0f0"></div>
<div class="a" style="left:1202px;top:93px;width:15px;height:287px;background:#cdcdcd"></div>
<svg style="left:1205px;top:82px" width="9" height="6" viewBox="0 0 9 6"><path d="M0.800 5l3.500-3.800l3.500 3.800" fill="none" stroke="#404040" stroke-width="1.700"/></svg>
<svg style="left:1205px;top:440px" width="9" height="6" viewBox="0 0 9 6"><path d="M0.800 0.800l3.500 3.800l3.500-3.800" fill="none" stroke="#404040" stroke-width="1.700"/></svg>
<div class="a" style="left:1101px;top:278px;width:104px;height:40px;background:transparent;border:5px solid #ed1c24"></div>
<div class="a" style="left:1123px;top:287px;width:15.5px;height:15.5px;background:#3fbf7f"></div>
<svg style="left:1123px;top:287px" width="16" height="16" viewBox="0 0 16 16"><path d="M3.500 7.500l3 3l5.500-6" class="iw" style="stroke-width:1.500"/></svg>
<div class="a" style="left:1175px;top:287px;width:15.5px;height:15.5px;background:#3fbf7f"></div>
<svg style="left:1175px;top:287px" width="16" height="16" viewBox="0 0 16 16"><path d="M3.500 7.500l3 3l5.500-6" class="iw" style="stroke-width:1.500"/></svg>
<div class="a" style="left:969px;top:454px;width:249px;height:150px;background:#fff"></div>
<div class="a" style="left:969px;top:454px;width:249px;height:25px;background:#00adee"></div>
<div class="t b w" style="left:972.76px;top:459px;font-size:14px;letter-spacing:-0.661px">Nastavení</div>
<div class="a" style="left:1193px;top:456px;width:1px;height:21px;background:#0a93cf"></div>
<svg style="left:1199px;top:463px" width="14" height="8" viewBox="0 0 14 8"><path d="M0.500 7.500l6.500-6.500l6.500 6.500" class="iw"/></svg>
<div class="t bl" style="left:982.42px;top:485px;letter-spacing:-0.024px">Nastavené období</div>
<div class="a" style="left:976px;top:500px;width:236px;height:23px;background:#fff;border:1px solid #ababab"></div>
<div class="t" style="left:978.65px;top:505px;font-size:13px">2021/01</div>
<div class="t bl" style="left:983.02px;top:529px;letter-spacing:-0.010px">Zpracované období</div>
<div class="a" style="left:976px;top:544px;width:236px;height:23px;background:#fff;border:1px solid #ababab"></div>
<div class="t" style="left:978.65px;top:549px;font-size:13px">2020/12</div>
<div class="a" style="left:977px;top:576px;width:17px;height:17px;background:#fff;border:1px solid #1b4f9f"></div>
<div class="t bl" style="left:999.77px;top:577px;letter-spacing:-0.036px">Úplný výpis položek</div>
<svg style="left:1194px;top:507px" width="11" height="10" viewBox="0 0 11 10"><g fill="#5c8ac8"><rect x="0.500" y="0" width="2.400" height="2.400"/><rect x="4.300" y="0" width="2.400" height="2.400"/><rect x="8.100" y="0" width="2.400" height="2.400"/></g><path d="M0.500 4.500l5 4.500l5-4.500" class="ic"/></svg><svg style="left:1194px;top:551px" width="11" height="10" viewBox="0 0 11 10"><g fill="#5c8ac8"><rect x="0.500" y="0" width="2.400" height="2.400"/><rect x="4.300" y="0" width="2.400" height="2.400"/><rect x="8.100" y="0" width="2.400" height="2.400"/></g><path d="M0.500 4.500l5 4.500l5-4.500" class="ic"/></svg>
</body>
</html>
